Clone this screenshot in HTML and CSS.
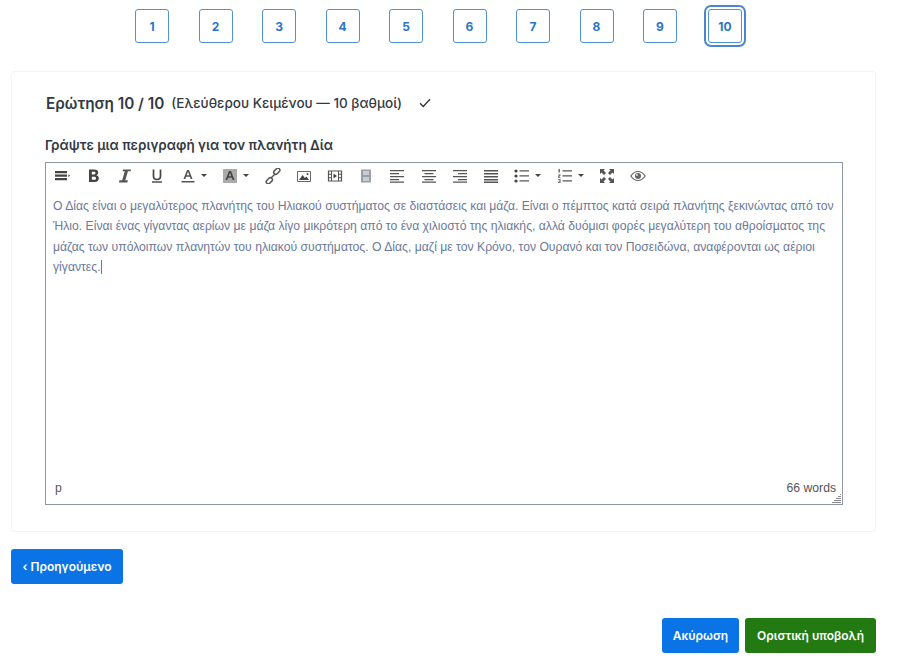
FILE: index.html
```html
<!DOCTYPE html>
<html>
  <head>
    <title>Εξέταση</title>
    <meta charset="utf8">
    <link rel="stylesheet" href="styles.css">
  </head>
  <body>
    <div class="page">
      <div class="pager">
        <button class="pageBtn">1</button>
        <button class="pageBtn">2</button>
        <button class="pageBtn">3</button>
        <button class="pageBtn">4</button>
        <button class="pageBtn">5</button>
        <button class="pageBtn">6</button>
        <button class="pageBtn">7</button>
        <button class="pageBtn">8</button>
        <button class="pageBtn">9</button>
        <button class="pageBtn current">10</button>
      </div>

      <div class="card">
        <div class="questionHead">
          <span class="questionNum">Ερώτηση 10 / 10</span>
          <span class="questionType">(Ελεύθερου Κειμένου — 10 βαθμοί)</span>
          <svg class="check" width="12" height="10" viewBox="0 0 12 10"><path d="M1 5.2 4.2 8.5 11 1.3" fill="none" stroke="#333" stroke-width="1.3"/></svg>
        </div>
        <div class="prompt">Γράψτε μια περιγραφή για τον πλανήτη Δία</div>

        <div class="editor">
          <div class="toolbar">
            <span class="tool"><svg width="16" height="16" viewBox="0 0 16 16"><path d="M0 3h12v2.300H0zM0 6.500h12v2.300H0zM0 10h12v2.300H0zM13.500 6.300l1.700 1.400-1.700 1.400z" fill="#444"/></svg></span>
            <span class="tool"><svg width="16" height="16" viewBox="0 0 16 16"><path d="M3 1.500h5.500c2.400 0 3.700 1.200 3.700 3.100 0 1.300-.7 2.200-1.800 2.700 1.500.4 2.400 1.500 2.400 3 0 2.200-1.500 3.700-4.200 3.700H3zM5.800 3.800v2.700h2.200c1 0 1.500-.5 1.500-1.400s-.5-1.300-1.500-1.300zM5.800 8.700v3.100h2.600c1 0 1.600-.6 1.600-1.600s-.6-1.500-1.600-1.500z" fill="#444" fill-rule="evenodd"/></svg></span>
            <span class="tool"><svg width="16" height="16" viewBox="0 0 16 16"><path d="M6 1.500h8l-.4 1.800h-2.700L8.300 12.200h2.500l-.4 2.300H2l.4-2.300h2.800L7.800 3.300H5.600z" fill="#555"/></svg></span>
            <span class="tool"><svg width="16" height="16" viewBox="0 0 16 16"><path d="M4.500 1.500V8c0 2.300 1.300 3.500 3.500 3.500s3.500-1.200 3.500-3.500V1.500" fill="none" stroke="#444" stroke-width="1.700"/><path d="M3 13.300h10v1.400H3z" fill="#444"/></svg></span>
            <span class="tool drop"><svg width="16" height="16" viewBox="0 0 16 16"><path d="M3.500 11 7 2h2l3.500 9h-1.800l-.8-2.200H6.100L5.300 11zM6.700 7.200h2.600L8 3.800z" fill="#555" fill-rule="evenodd"/><path d="M1.500 13h13v1.500h-13z" fill="#555"/></svg><i class="caret"></i></span>
            <span class="tool drop"><svg width="16" height="16" viewBox="0 0 16 16"><path d="M1 1h14v14H1z" fill="#aaa"/><path d="M3.500 12 7 3h2l3.500 9h-1.800l-.8-2.200H6.100L5.300 12zM6.700 8.200h2.600L8 4.800z" fill="#444" fill-rule="evenodd"/></svg><i class="caret"></i></span>
            <span class="tool"><svg width="16" height="16" viewBox="0 0 16 16"><g fill="none" stroke="#555" stroke-width="1.500"><rect x="8.300" y="1.200" width="7" height="4" rx="2" transform="rotate(-45 11.800 3.200)"/><rect x=".8" y="10.800" width="7" height="4" rx="2" transform="rotate(-45 4.300 12.800)"/><path d="M6 10l4-4"/></g></svg></span>
            <span class="tool"><svg width="16" height="16" viewBox="0 0 16 16"><path d="M1.500 3.500h13v10h-13z" fill="none" stroke="#666"/><path d="M3 12l3.500-5 2.500 3 1.500-1.500L13 12z" fill="#444"/><circle cx="11.500" cy="6" r="1.100" fill="#555"/></svg></span>
            <span class="tool"><svg width="16" height="16" viewBox="0 0 16 16"><path d="M1.500 3h13v10h-13z" fill="none" stroke="#555" stroke-width="1.200"/><path d="M4.500 3v10M11.500 3v10M1 6.300h3.500M1 9.700h3.500M11.500 6.300H15M11.500 9.700H15" stroke="#555"/><path d="M6.500 5.500 10 8l-3.500 2.500z" fill="#444"/></svg></span>
            <span class="tool"><svg width="16" height="16" viewBox="0 0 16 16"><path d="M3 1.500h10v13H3z" fill="#9aa0a6"/><path d="M5 3h6v4H5zM5 9h6v4H5z" fill="#c9cdd2"/></svg></span>
            <span class="tool"><svg width="16" height="16" viewBox="0 0 16 16"><path d="M1 2h14v1.300H1zM1 5h9v1.300H1zM1 8h14v1.300H1zM1 11h9v1.300H1zM1 13.500h14v1.300H1z" fill="#555"/></svg></span>
            <span class="tool"><svg width="16" height="16" viewBox="0 0 16 16"><path d="M1 2h14v1.300H1zM3.500 5h9v1.300h-9zM1 8h14v1.300H1zM3.500 11h9v1.300h-9zM1 13.500h14v1.300H1z" fill="#555"/></svg></span>
            <span class="tool"><svg width="16" height="16" viewBox="0 0 16 16"><path d="M1 2h14v1.300H1zM6 5h9v1.300H6zM1 8h14v1.300H1zM6 11h9v1.300H6zM1 13.500h14v1.300H1z" fill="#555"/></svg></span>
            <span class="tool"><svg width="16" height="16" viewBox="0 0 16 16"><path d="M1 2h14v1.500H1zM1 5h14v1.500H1zM1 8h14v1.500H1zM1 11h14v1.500H1zM1 13.500h14V15H1z" fill="#555"/></svg></span>
            <span class="tool drop"><svg width="16" height="16" viewBox="0 0 16 16"><circle cx="2" cy="3" r="1.600" fill="#444"/><circle cx="2" cy="8" r="1.600" fill="#444"/><circle cx="2" cy="13" r="1.600" fill="#444"/><path d="M5.500 2.300H15v1.300H5.500zM5.500 7.300H15v1.300H5.500zM5.500 12.300H15v1.300H5.500z" fill="#555"/></svg><i class="caret"></i></span>
            <span class="tool drop"><svg width="16" height="16" viewBox="0 0 16 16"><path d="M1.500 1h1.300v3.600H1.500zM1 6.500h2.500v1L2 9h1.500v.8H1v-1l1.500-1.500H1zM1 11h2.500v4H1v-.8h1.700v-.8H1.500v-.7h1.200v-.9H1z" fill="#555"/><path d="M5.500 2.300H15v1.300H5.500zM5.500 7.300H15v1.300H5.500zM5.500 12.300H15v1.300H5.500z" fill="#555"/></svg><i class="caret"></i></span>
            <span class="tool"><svg width="16" height="16" viewBox="0 0 16 16"><path d="M1 1h5L4.500 2.500 7 5 5 7 2.500 4.500 1 6zM15 1v5l-1.500-1.500L11 7 9 5l2.500-2.500L10 1zM1 15v-5l1.500 1.500L5 9l2 2-2.500 2.500L6 15zM15 15h-5l1.500-1.500L9 11l2-2 2.500 2.500L15 10z" fill="#555"/></svg></span>
            <span class="tool"><svg width="16" height="16" viewBox="0 0 16 16"><path d="M.8 8C3 4.800 5.300 3.500 8 3.500s5 1.300 7.200 4.500c-2.200 3.200-4.500 4.500-7.200 4.500S3 11.200.8 8z" fill="none" stroke="#666" stroke-width="1.200"/><circle cx="8" cy="8" r="3" fill="#666"/><circle cx="7" cy="7" r="1" fill="#ddd"/></svg></span>
          </div>
          <div class="editArea">
            Ο Δίας είναι ο μεγαλύτερος πλανήτης του Ηλιακού συστήματος σε διαστάσεις και μάζα. Είναι ο πέμπτος κατά σειρά πλανήτης ξεκινώντας από τον Ήλιο. Είναι ένας γίγαντας αερίων με μάζα λίγο μικρότερη από το ένα χιλιοστό της ηλιακής, αλλά δυόμισι φορές μεγαλύτερη του αθροίσματος της μάζας των υπόλοιπων πλανητών του ηλιακού συστήματος. Ο Δίας, μαζί με τον Κρόνο, τον Ουρανό και τον Ποσειδώνα, αναφέρονται ως αέριοι γίγαντες.<span class="cursor"></span>
          </div>
          <div class="statusBar">
            <span>p</span>
            <span>66 words</span>
          </div>
          <svg class="grip" width="10" height="10" viewBox="0 0 10 10"><path d="M9 1.500h1M7 3.500h3M5 5.500h5M3 7.500h7M1 9.500h9" stroke="#888" stroke-width="1"/></svg>
        </div>
      </div>

      <div class="prevRow">
        <button class="btn blue">‹ Προηγούμενο</button>
      </div>

      <div class="actions">
        <button class="btn blue cancel">Ακύρωση</button>
        <button class="btn green">Οριστική υποβολή</button>
      </div>
    </div>
  </body>
</html>
```

FILE: styles.css
```css
* {
  box-sizing: border-box;
}

body {
  margin: 0;
  background: #fff;
  font-family: 'Inter', 'Noto Sans', sans-serif;
}

.page {
  width: 865px;
  margin-left: 11px;
}

button {
  font-family: inherit;
}

.pager {
  display: flex;
  justify-content: center;
  gap: 29.5px;
  padding: 9px 10px 0 0;
  height: 71px;
}

.pageBtn {
  width: 34px;
  height: 34px;
  padding: 0;
  background: #fff;
  border: 1px solid #4f93cf;
  border-radius: 3px;
  color: #2b75c4;
  font-size: 12px;
  font-weight: 700;
}

.current {
  margin-left: 1.5px;
  box-shadow: 0 0 0 2px #fff, 0 0 0 4px #4a86d0;
}

.card {
  height: 461px;
  padding: 20px 32px 0 33px;
  border: 1px solid #f3f4f6;
  border-radius: 4px;
}

.questionHead {
  display: flex;
  align-items: center;
  height: 22px;
  color: #333a44;
}

.questionNum {
  margin-left: 1px;
  font-size: 15.3px;
  font-weight: 600;
}

.questionType {
  margin-left: 7px;
  font-size: 13.5px;
  font-weight: 500;
}

.check {
  margin-left: 17px;
}

.prompt {
  margin-top: 23px;
  height: 17px;
  color: #333a44;
  font-size: 13.5px;
  font-weight: 600;
  line-height: 17px;
}

.editor {
  position: relative;
  width: 798px;
  height: 343px;
  margin-top: 8px;
  display: flex;
  flex-direction: column;
  border: 1px solid #8d96a3;
}

.toolbar {
  display: flex;
  align-items: center;
  height: 25px;
  padding-left: 1.4px;
}

.tool {
  display: flex;
  align-items: center;
  flex: none;
  width: 31.2px;
  padding-left: 7.6px;
}

.drop {
  width: 42.5px;
}

.caret {
  margin-left: 5px;
  border: 3px solid transparent;
  border-top: 3px solid #444;
  border-bottom: 0;
}

.editArea {
  flex: 1;
  padding: 7.5px 7px 0 7px;
  color: #6b7a99;
  font-family: 'Liberation Sans', Arial, sans-serif;
  font-size: 12.2px;
  line-height: 20.5px;
}

.cursor {
  display: inline-block;
  width: 1px;
  height: 14px;
  background: #777;
  vertical-align: -3px;
}

.statusBar {
  display: flex;
  justify-content: space-between;
  height: 27px;
  padding: 0 6px 0 9px;
  color: #555;
  font-family: 'Liberation Sans', Arial, sans-serif;
  font-size: 12.2px;
  line-height: 22px;
}

.grip {
  position: absolute;
  right: 1px;
  bottom: 1px;
}

.btn {
  height: 35px;
  padding: 0 12px;
  border: 0;
  border-radius: 3px;
  color: #fff;
  font-size: 12px;
  font-weight: 600;
}

.blue {
  padding: 0 11.5px;
  background: #0a74e6;
}

.cancel {
  padding: 0 11px;
}

.green {
  padding: 0 12px;
  background: #237a12;
}

.prevRow {
  margin-top: 17px;
}

.actions {
  display: flex;
  justify-content: flex-end;
  gap: 6px;
  margin-top: 34px;
}
```
